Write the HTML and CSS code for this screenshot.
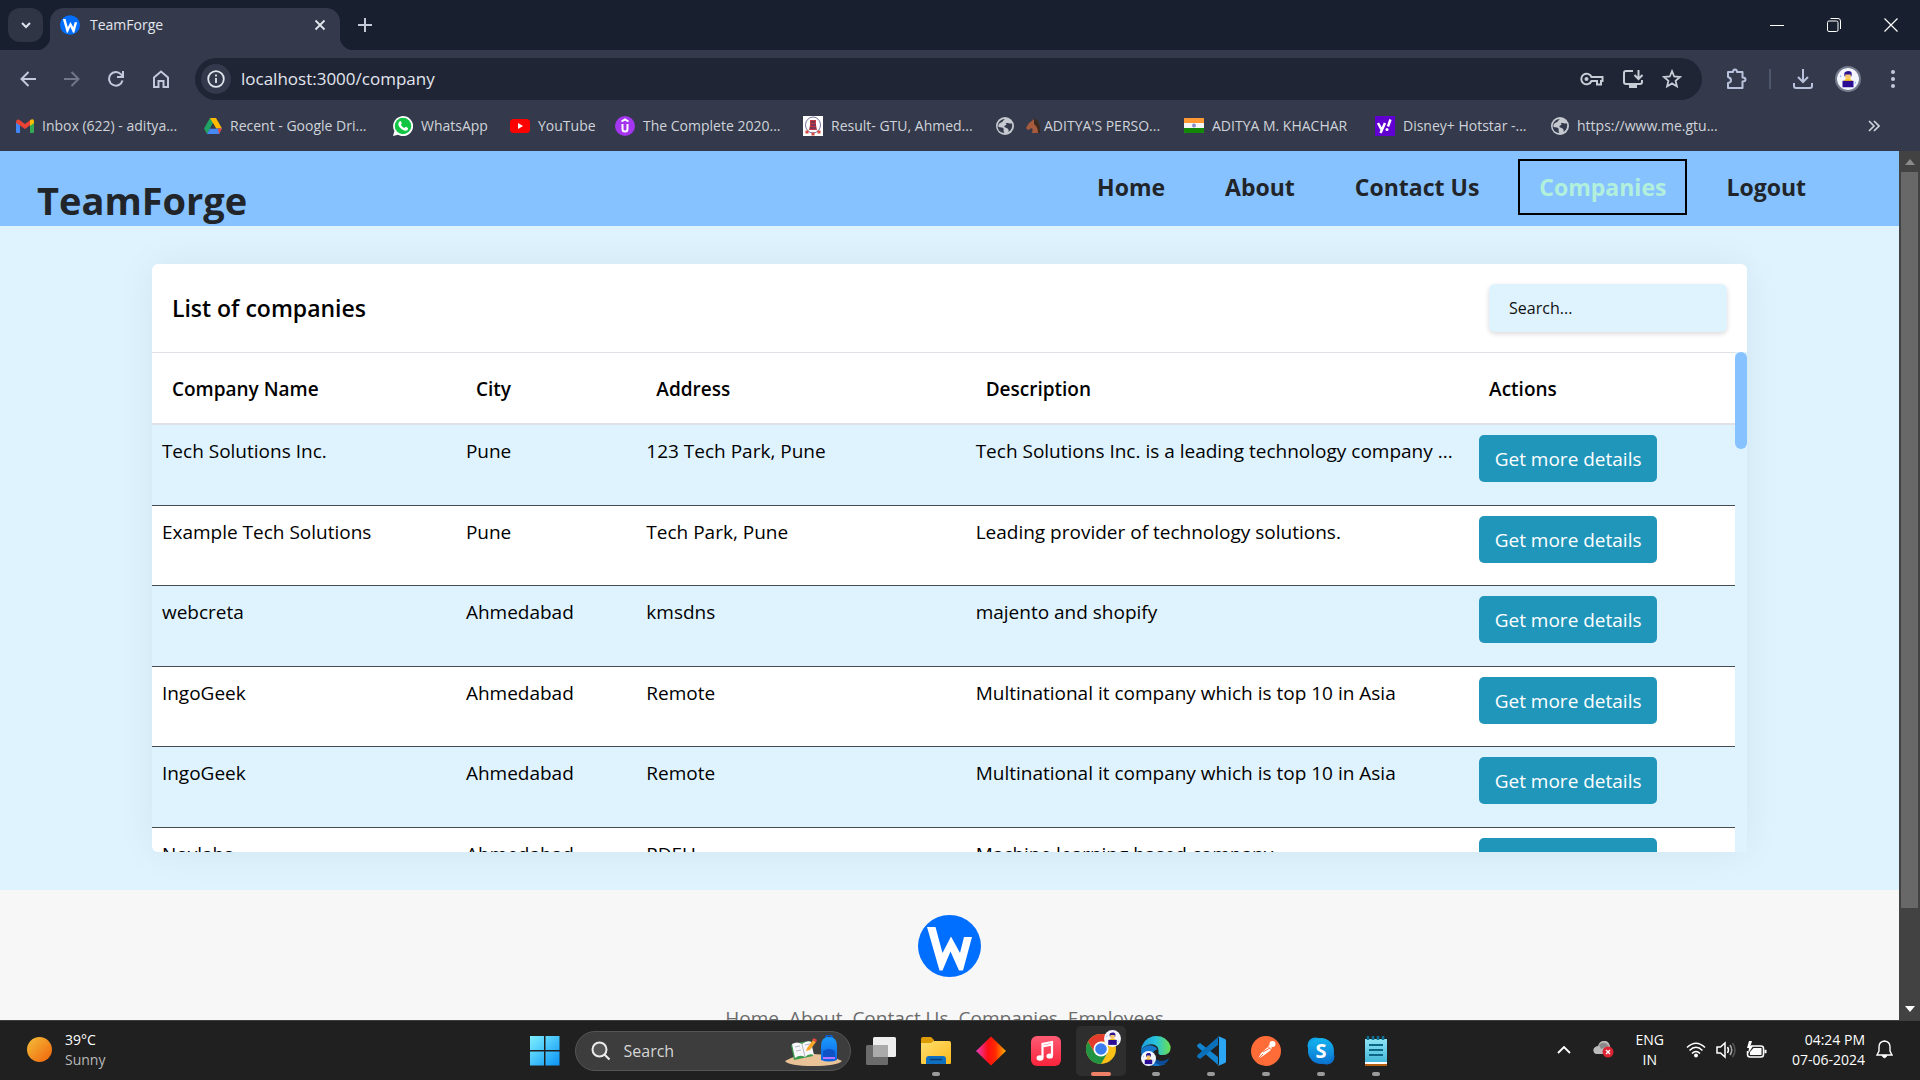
FILE: index.html
```html
<!DOCTYPE html>
<html lang="en">
<head>
<meta charset="utf-8">
<title>TeamForge</title>
<link rel="stylesheet" href="styles.css">
</head>
<body>
<svg class="defs" aria-hidden="true">
  <defs>
    <symbol id="logo" viewBox="0 0 63 62"><ellipse cx="31.500" cy="31" rx="31.500" ry="31" fill="#006eff"/><path d="M9 12h8.500l7 26 8.500-16.500 9 16.500 4-16h8l-9 33.500h-4L32.500 36.500l-8 19h-3z" fill="#fff"/></symbol>
    <symbol id="globe" viewBox="0 0 18 18"><circle cx="9" cy="9" r="9" fill="#c6c9d0"/><path d="M9 2c-2 1-2 3-4 3.500S2 8 2.500 10c2 .5 4.500 0 5 1.500S7 14.500 8.500 16c-5 0-7-4-6.800-7C2 5 5 2 9 2zM10 6c2-.5 3.500 1 6 .5.800 4-1 7-3.500 8.500.5-2.500-.5-3.500-2-4S8 10 8.500 9s2-.5 2-1.500S9.500 7 10 6z" fill="#343a4b"/></symbol>
    <symbol id="avatar" viewBox="0 0 24 24"><circle cx="12" cy="12" r="12" fill="#f4f6ff"/><path d="M8 9V6c0-3 8-4 8 0v3z" fill="#2a1390"/><path d="M9 7h6v4q-3 3-6 0z" fill="#f6c66a"/><path d="M7 14q5-5 10 0v2H7z" fill="#ffc928"/><path d="M6 14h12v7H6z" fill="#2a0d92"/><path d="M4 8v2M20 15v2" stroke="#7ea7ff"/></symbol>
    <linearGradient id="sun" x1="0" y1="0" x2="1" y2="1"><stop stop-color="#f4c03a"/><stop offset="1" stop-color="#f0620a"/></linearGradient>
    <linearGradient id="win" x1="0" y1="0" x2="1" y2="1"><stop stop-color="#7ff0ff"/><stop offset="1" stop-color="#0a94f5"/></linearGradient>
    <linearGradient id="folder" x1="0" y1="0" x2="1" y2="1"><stop stop-color="#ffdf70"/><stop offset="1" stop-color="#fcb91a"/></linearGradient>
    <linearGradient id="gem"><stop stop-color="#e93cc0"/><stop offset=".4" stop-color="#ff0f14"/><stop offset=".65" stop-color="#ff2a00"/><stop offset="1" stop-color="#ffb400"/></linearGradient>
    <linearGradient id="music" x2="0" y2="1"><stop stop-color="#fc5c74"/><stop offset="1" stop-color="#fa233b"/></linearGradient>
    <linearGradient id="edge"><stop stop-color="#1e9bdc"/><stop offset=".5" stop-color="#27c3dc"/><stop offset="1" stop-color="#6ce04e"/></linearGradient>
    <linearGradient id="skype" x2="0" y2="1"><stop stop-color="#14b5f0"/><stop offset="1" stop-color="#0b73d0"/></linearGradient>
    <linearGradient id="pad" x2="0" y2="1"><stop stop-color="#8de5f4"/><stop offset="1" stop-color="#3eb4d6"/></linearGradient>
    <linearGradient id="pack" x2="0" y2="1"><stop stop-color="#1c9cff"/><stop offset="1" stop-color="#0a5fe0"/></linearGradient>
  </defs>
</svg>

<header class="browser">
  <div class="tabstrip">
    <button class="tab-search" aria-label="Search tabs"><svg viewBox="0 0 12 12" width="12" height="12"><path d="M2 4l4 4 4-4" fill="none" stroke="#dfe2ea" stroke-width="2"/></svg></button>
    <div class="tab">
      <svg width="20" height="20"><use href="#logo"/></svg>
      <span class="tab-title">TeamForge</span>
      <button class="icon-btn" aria-label="Close tab"><svg viewBox="0 0 12 12" width="12" height="12"><path d="M1.500 1.500l9 9M10.500 1.500l-9 9" stroke="#e3e6ee" stroke-width="1.800"/></svg></button>
    </div>
    <button class="icon-btn new-tab" aria-label="New tab"><svg viewBox="0 0 14 14" width="14" height="14"><path d="M7 0v14M0 7h14" stroke="#c5cad8" stroke-width="2"/></svg></button>
    <div class="window-controls">
      <button class="icon-btn" aria-label="Minimize"><svg viewBox="0 0 14 14" width="14" height="14"><path d="M0 7.500h14" stroke="#fff"/></svg></button>
      <button class="icon-btn" aria-label="Restore"><svg viewBox="0 0 14 14" width="14" height="14"><g fill="none" stroke="#fff"><rect x=".5" y="3" width="10.500" height="10.500" rx="1.500"/><path d="M3.500.5H11q2.500 0 2.500 2.500v8"/></g></svg></button>
      <button class="icon-btn" aria-label="Close"><svg viewBox="0 0 14 14" width="14" height="14"><path d="M.5.5l13 13M13.500.5l-13 13" stroke="#fff" stroke-width="1.200"/></svg></button>
    </div>
  </div>
  <div class="toolbar">
    <div class="nav-buttons">
      <button class="icon-btn" aria-label="Back"><svg viewBox="0 0 16 16" width="16" height="16"><path d="M16 8H2M8.500 1L1.500 8l7 7" fill="none" stroke="#c3c9dc" stroke-width="2"/></svg></button>
      <button class="icon-btn" aria-label="Forward"><svg viewBox="0 0 16 16" width="16" height="16"><path d="M0 8h14M7.500 1l7 7-7 7" fill="none" stroke="#717788" stroke-width="2"/></svg></button>
      <button class="icon-btn" aria-label="Reload"><svg viewBox="0 0 16 16" width="16" height="16"><path d="M14.500 9.500A6.800 6.800 0 1 1 13 3.300l1.500 1.700M15 0v6H9" fill="none" stroke="#c3c9dc" stroke-width="2"/></svg></button>
      <button class="icon-btn" aria-label="Home"><svg viewBox="0 0 18 18" width="18" height="18"><path d="M2 7.500L9 1.500l7 6V17h-4.500v-6h-5v6H2z" fill="none" stroke="#c3c9dc" stroke-width="2"/></svg></button>
    </div>
    <div class="omnibox">
      <button class="site-info" aria-label="Site information"><svg viewBox="0 0 18 18" width="18" height="18"><circle cx="9" cy="9" r="7.800" fill="none" stroke="#e3e6ee" stroke-width="1.800"/><path d="M9 8v5M9 4.500v2" stroke="#e3e6ee" stroke-width="1.800"/></svg></button>
      <input class="url" type="text" value="localhost:3000/company" aria-label="Address">
      <button class="icon-btn" aria-label="Passwords"><svg viewBox="0 0 24 14" width="24" height="14"><path d="M11.500 5H22.500v4H21v3.500h-4V9h-5.500A5.300 5.300 0 1 1 11.500 5z" fill="none" stroke="#c8ccd6" stroke-width="2"/><circle cx="6.500" cy="7" r="2" fill="#c8ccd6"/></svg></button>
      <button class="icon-btn" aria-label="Install app"><svg viewBox="0 0 22 20" width="22" height="20"><path d="M11 2H4Q2 2 2 4v9q0 2 2 2h14q2 0 2-2v-2M7 18h8" fill="none" stroke="#c8ccd6" stroke-width="2"/><path d="M7 15h8v4H7z" fill="#c8ccd6"/><path d="M16.500 1v8M12.500 6l4 4 4-4" fill="none" stroke="#c8ccd6" stroke-width="2"/></svg></button>
      <button class="icon-btn" aria-label="Bookmark"><svg viewBox="0 0 20 20" width="20" height="20"><path d="M10 2.200l2.200 5.300 5.800.5-4.400 3.800 1.300 5.600L10 14.400l-4.900 3 1.300-5.600L2 8l5.800-.5z" fill="none" stroke="#c8ccd6" stroke-width="1.800"/></svg></button>
    </div>
    <div class="toolbar-end">
      <button class="icon-btn" aria-label="Extensions"><svg viewBox="0 0 22 22" width="22" height="22"><path d="M3 4h5q0-2.500 2-2.500T12 4h5.500v5.500q3 0 3 2t-3 2V20H3v-5q3-.5 3-2.800T3 9z" fill="none" stroke="#b9c2dc" stroke-width="2" stroke-linejoin="round"/></svg></button>
      <span class="divider"></span>
      <button class="icon-btn" aria-label="Downloads"><svg viewBox="0 0 20 20" width="20" height="20"><path d="M10 0v12M5 8l5 5 5-5M1 14v3q0 2 2 2h14q2 0 2-2v-3" fill="none" stroke="#b9c2dc" stroke-width="2"/></svg></button>
      <button class="icon-btn profile" aria-label="Profile"><svg width="22" height="22"><use href="#avatar"/></svg></button>
      <button class="icon-btn" aria-label="Menu"><svg viewBox="0 0 4 18" width="4" height="18" fill="#c3c9dc"><circle cx="2" cy="2" r="2"/><circle cx="2" cy="9" r="2"/><circle cx="2" cy="16" r="2"/></svg></button>
    </div>
  </div>
  <nav class="bookmarks" aria-label="Bookmarks">
    <a href="#"><svg viewBox="0 0 18 14" width="18" height="14"><path d="M0 3v10q0 1 1 1h3V5z" fill="#4285f4"/><path d="M14 5v9h3q1 0 1-1V3z" fill="#34a853"/><path d="M0 3q0-3 2.800-2.500L9 5l6-4.500v5L9 10 0 3.800z" fill="#ea4335"/><path d="M14 1.200Q18-1 18 2.500V4l-4 3z" fill="#fbbc04"/></svg><span>Inbox (622) - aditya...</span></a>
    <a href="#"><svg viewBox="0 0 18 16" width="18" height="16"><path d="M6 0h6L3 16 0 10.500z" fill="#1fa463"/><path d="M6 0h6l6 10.500h-6z" fill="#ffba00"/><path d="M3 16l3-5.500h12L15 16z" fill="#4688f4"/><path d="M9 5.200l3 5.300H6z" fill="#343a4b"/><path d="M14 10.500h4L15 16z" fill="#ea4335"/></svg><span>Recent - Google Dri...</span></a>
    <a href="#"><svg viewBox="0 0 20 20" width="20" height="20"><path d="M0 20l1.400-5A10 10 0 1 1 5 18.700z" fill="#fff"/><circle cx="10" cy="10" r="8.300" fill="#12c644"/><path d="M6.500 5.500q1-1 1.500 0l.8 2-.9 1.200q1.300 2.500 3.600 3.400l1.200-1.300 2.300 1.200q.2 2.500-2.300 2.700C8.500 14.500 5 10 5.300 8q.3-1.700 1.200-2.500z" fill="#fff"/></svg><span>WhatsApp</span></a>
    <a href="#"><svg viewBox="0 0 20 14" width="20" height="14"><rect width="20" height="14" rx="3.500" fill="red"/><path d="M8 4l5 3-5 3z" fill="#fff"/></svg><span>YouTube</span></a>
    <a href="#"><svg viewBox="0 0 20 20" width="20" height="20"><circle cx="10" cy="10" r="10" fill="#a435f0"/><path d="M6.500 5.500L10 3.500l3.500 2M7.500 8v5q0 2.500 2.500 2.500t2.500-2.500V8" fill="none" stroke="#fff" stroke-width="2"/></svg><span>The Complete 2020...</span></a>
    <a href="#"><svg viewBox="0 0 20 20" width="20" height="20"><path fill="#fff" d="M0 0h20v20H0z"/><ellipse cx="10" cy="9" rx="7.500" ry="8" fill="none" stroke="#77719c"/><path d="M7 4h6v5l1 5H6l1-5z" fill="#c43b42"/><path d="M8 6h4M8 9h5M7 12h6" stroke="#32336d"/><path d="M2.500 16h3M8.500 18h3M14.500 16h3" stroke="#d44a40" stroke-width="3"/></svg><span>Result- GTU, Ahmed...</span></a>
    <a href="#"><svg width="18" height="18"><use href="#globe"/></svg><span class="with-emoji"><svg viewBox="0 0 14 15" width="14" height="15"><path d="M8 1l2 2 2 4 1 8H6q1-4 0-5l-4 2-2-2 3-5 3-2z" fill="#a75b3c"/><path d="M8 0l4 3 2 6v6h-2q0-6-4-9z" fill="#3c2920"/></svg>ADITYA'S PERSO...</span></a>
    <a href="#"><svg viewBox="0 0 20 15" width="20" height="15"><rect width="20" height="15" rx="1.500" fill="#f5f5f5"/><path d="M0 5V1q0-1 1-1h18q1 0 1 1v4z" fill="#ff9933"/><path d="M0 10v4q0 1 1 1h18q1 0 1-1v-4z" fill="#138808"/><circle cx="10" cy="7.500" r="2" fill="#8890cc"/></svg><span>ADITYA M. KHACHAR</span></a>
    <a href="#"><svg viewBox="0 0 20 20" width="20" height="20"><path d="M0 0h20v20H0z" fill="#6001d2"/><path d="M3 7l3.500 6.500M10 7l-4.500 10M15.500 3.500l-2.500 7" stroke="#fff" stroke-width="2.500"/><circle cx="12" cy="13.500" r="1.500" fill="#fff"/></svg><span>Disney+ Hotstar -...</span></a>
    <a href="#"><svg width="18" height="18"><use href="#globe"/></svg><span>https://www.me.gtu...</span></a>
    <button class="icon-btn more" aria-label="More bookmarks"><svg viewBox="0 0 12 12" width="12" height="12"><path d="M1 1l5 5-5 5M6 1l5 5-5 5" fill="none" stroke="#d0d4de" stroke-width="1.600"/></svg></button>
  </nav>
</header>

<div class="viewport">
  <div class="page">
    <header class="site-header">
      <a class="brand" href="#">TeamForge</a>
      <nav class="site-nav">
        <a href="#">Home</a>
        <a href="#">About</a>
        <a href="#">Contact Us</a>
        <a class="active" href="#">Companies</a>
        <a href="#">Logout</a>
      </nav>
    </header>
    <main class="content">
      <section class="card">
        <div class="card-head">
          <h1>List of companies</h1>
          <input class="search" type="text" placeholder="Search..." aria-label="Search companies">
        </div>
        <div class="list">
          <table>
            <colgroup><col class="c-name"><col class="c-city"><col class="c-address"><col class="c-desc"><col class="c-actions"></colgroup>
            <thead><tr><th>Company Name</th><th>City</th><th>Address</th><th>Description</th><th>Actions</th></tr></thead>
            <tbody>
              <tr><td>Tech Solutions Inc.</td><td>Pune</td><td>123 Tech Park, Pune</td><td>Tech Solutions Inc. is a leading technology company ...</td><td><button class="details">Get more details</button></td></tr>
              <tr><td>Example Tech Solutions</td><td>Pune</td><td>Tech Park, Pune</td><td>Leading provider of technology solutions.</td><td><button class="details">Get more details</button></td></tr>
              <tr><td>webcreta</td><td>Ahmedabad</td><td>kmsdns</td><td>majento and shopify</td><td><button class="details">Get more details</button></td></tr>
              <tr><td>IngoGeek</td><td>Ahmedabad</td><td>Remote</td><td>Multinational it company which is top 10 in Asia</td><td><button class="details">Get more details</button></td></tr>
              <tr><td>IngoGeek</td><td>Ahmedabad</td><td>Remote</td><td>Multinational it company which is top 10 in Asia</td><td><button class="details">Get more details</button></td></tr>
              <tr><td>Novlabs</td><td>Ahmedabad</td><td>PDEU</td><td>Machine learning based company</td><td><button class="details">Get more details</button></td></tr>
            </tbody>
          </table>
          <div class="list-scroll"><div class="list-thumb"></div></div>
        </div>
      </section>
    </main>
    <footer class="site-footer">
      <svg width="63" height="62"><use href="#logo"/></svg>
      <nav class="footer-nav">
        <a href="#">Home</a><a href="#">About</a><a href="#">Contact Us</a><a href="#">Companies</a><a href="#">Employees</a>
      </nav>
    </footer>
  </div>
  <div class="scrollbar">
    <svg viewBox="0 0 10 6" width="10" height="6"><path d="M0 6l5-6 5 6z" fill="#8b8b8b"/></svg>
    <div class="scroll-track"><div class="scroll-thumb"></div></div>
    <svg viewBox="0 0 10 6" width="10" height="6"><path d="M0 0l5 6 5-6z" fill="#fff"/></svg>
  </div>
</div>

<footer class="taskbar">
  <div class="weather">
    <svg viewBox="0 0 25 25" width="25" height="25"><circle cx="12.500" cy="12.500" r="12.500" fill="url(#sun)"/></svg>
    <div><div>39°C</div><div class="muted">Sunny</div></div>
  </div>
  <div class="apps">
    <button class="app" aria-label="Start"><svg viewBox="0 0 30 30" width="30" height="30"><path d="M0 0h14v14H0zM15.500 0h14v14h-14zM0 15.500h14v14H0zM15.500 15.500h14v14h-14z" fill="url(#win)"/></svg></button>
    <label class="task-search">
      <svg viewBox="0 0 20 20" width="20" height="20"><circle cx="8.500" cy="8.500" r="7" fill="#555" stroke="#ececec" stroke-width="2"/><path d="M13.500 13.500l5 5" stroke="#ececec" stroke-width="2.200"/></svg>
      <input type="text" placeholder="Search" aria-label="Search">
      <svg viewBox="0 0 57 31" width="57" height="31"><path d="M0 26q12-7 28-7t29 7q-5 5-29 5T0 26z" fill="#e9c397"/><path d="M6 10l11-3 9-1 2 15-19 4z" fill="#3c9a4e"/><path d="M7 9q5-3 10 0 5-4 9-2l3 13q-5-2-9 2-5-3-10 1z" fill="#f7f7fb"/><path d="M17 9l3 13M10 12l5-1M11 16l5-1M20 10l5-1" stroke="#b5b7c2"/><path d="M22 13l6-8 3 2-6 8-4 1z" fill="#f9a62b"/><path d="M27 5l2-2 3 2-1 2z" fill="#e44b43"/><path d="M41 3q0-3 3-3t3 3" fill="none" stroke="#0b5ed0" stroke-width="2"/><path d="M36 25V11q0-9 8-9t8 9v14q-8 3-16 0z" fill="url(#pack)"/><path d="M38 16q6-4 12 0v6H38z" fill="#0d53c6"/><path d="M38 23h12" stroke="#b774ff" stroke-width="2"/></svg>
    </label>
    <button class="app" aria-label="Task view"><svg viewBox="0 0 30 28" width="30" height="28"><rect y="8" width="22" height="20" rx="1.500" fill="#6b6b6b"/><rect x="7" width="23" height="20" rx="1.500" fill="#eee"/><path d="M7 8h15v12H7z" fill="#aaa"/></svg></button>
    <button class="app running" aria-label="File Explorer"><svg viewBox="0 0 30 28" width="30" height="28"><path d="M0 2q0-2 2-2h8l3 3v6H0z" fill="#dd9b06"/><path d="M0 6h10l3-2h15q2 0 2 2v20q0 1-1 1H1q-1 0-1-1z" fill="url(#folder)"/><path d="M5 27v-5q0-3 3-3h14q3 0 3 3v5z" fill="#0f6fc0"/><path d="M9 22.500h12" stroke="#073f75" stroke-width="1.500"/></svg></button>
    <button class="app" aria-label="Diamond"><svg viewBox="0 0 30 30" width="30" height="30"><path d="M15 .5L30 15 15 29.500 0 15z" fill="url(#gem)"/></svg></button>
    <button class="app" aria-label="Music"><svg viewBox="0 0 30 30" width="30" height="30"><rect width="30" height="30" rx="6" fill="url(#music)"/><path d="M11.500 21.500V8l9.500-2v13.500M11.500 10.500l9.500-2" fill="none" stroke="#fff" stroke-width="2.200"/><ellipse cx="9" cy="22" rx="3.500" ry="2.800" fill="#fff"/><ellipse cx="18.700" cy="20" rx="3.300" ry="2.600" fill="#fff"/></svg></button>
    <button class="app running current" aria-label="Chrome"><svg viewBox="0 0 40 38" width="40" height="38"><g transform="translate(5 4)"><circle cx="15" cy="15" r="15" fill="#fbc116"/><path d="M2 7.500a15 15 0 0 1 26 0H15L8.500 18.700z" fill="#e33b2e"/><path d="M2 7.500A15 15 0 0 0 15 30l6.500-11.300-13 0z" fill="#229342"/><circle cx="15" cy="15" r="7.500" fill="#fff"/><circle cx="15" cy="15" r="5.800" fill="#3b7ded"/></g><use href="#avatar" x="23" y="0" width="17" height="17"/></svg></button>
    <button class="app running" aria-label="Edge"><svg viewBox="0 0 30 30" width="30" height="30"><path d="M0 15Q1 3 12 .3 25-1.500 29.500 10q1 9-8.500 9-4 0-3.500-3 .5-6-5-7.500Q4 7 0 15z" fill="url(#edge)"/><path d="M0 15q4-7 11-5.500 4 1 5.500 4-6 1-4 8 3 6 9 6.500h3Q17 31.500 9 29 0 25 0 15z" fill="#1478cc"/><path d="M12.500 17q0 7 7.500 8 4 .5 8-3-1 5-7 7-8 0-9.500-7z" fill="#0c4d9b"/><use href="#avatar" x="0" y="15" width="15" height="15"/></svg></button>
    <button class="app running" aria-label="Visual Studio Code"><svg viewBox="0 0 30 30" width="30" height="30"><path d="M1 9l3-2 18 14v8L1.500 11z" fill="#1384d0"/><path d="M1 21l3 2L22 9V1L1.500 19z" fill="#0a70ba"/><path d="M22 0l7 3q1 .5 1 2v20q0 1.500-1 2l-7 3q1-1 1-3V3q0-2-1-3z" fill="#2ba6f5"/></svg></button>
    <button class="app running" aria-label="Postman"><svg viewBox="0 0 30 30" width="30" height="30"><circle cx="15" cy="15" r="15" fill="#ff6c37"/><path d="M7 23l3-6 7-6 3 3-8 6zM17 10l2-1 2 3-1 1z" fill="#fff"/><circle cx="21.500" cy="8" r="3" fill="#fff"/><path d="M12 16l7-4M7 23l5-5" stroke="#ff6c37"/></svg></button>
    <button class="app running" aria-label="Skype"><svg viewBox="0 0 30 30" width="30" height="30"><circle cx="9.500" cy="9.500" r="8" fill="#0fa4e8"/><circle cx="20.500" cy="20.500" r="8" fill="#0b73d0"/><circle cx="15" cy="15" r="13" fill="url(#skype)"/><text x="15" y="22" text-anchor="middle" class="skype-s">S</text></svg></button>
    <button class="app running" aria-label="Notepad"><svg viewBox="0 0 30 30" width="30" height="30"><path d="M4 3h22v25H4z" fill="url(#pad)"/><path d="M4 26h22v2H4z" fill="#fff"/><path d="M4 28h22v2H4z" fill="#b4600f"/><path d="M8 9h14M8 14h14M8 19h14" stroke="#0d6686" stroke-width="2"/><path d="M7 0v4M12 0v4M17 0v4M22 0v4" stroke="#107094" stroke-width="2.500"/></svg></button>
  </div>
  <div class="tray">
    <button class="icon-btn" aria-label="Hidden icons"><svg viewBox="0 0 14 8" width="14" height="8"><path d="M1 7l6-6 6 6" fill="none" stroke="#fff" stroke-width="1.800"/></svg></button>
    <svg viewBox="0 0 21 17" width="21" height="17"><path d="M3 13q-4-2-2-6 2-2 4-2 2-6 8-5 3 1 4 5l1 8z" fill="#bbb"/><path d="M6 4q5-5 10 1l-8 3z" fill="#8a8a8a"/><circle cx="15" cy="11" r="5.500" fill="#dd2432"/><path d="M13 9l4 4M17 9l-4 4" stroke="#fff" stroke-width="1.300"/></svg>
    <div class="lang"><div>ENG</div><div>IN</div></div>
    <div class="status">
      <svg viewBox="0 0 20 16" width="20" height="16"><g fill="none" stroke="#fff" stroke-width="1.600"><path d="M1 5.500Q10-3 19 5.500M3.500 8.500q6.500-6.500 13 0M6 11.500q4-4 8 0"/></g><circle cx="10" cy="13.500" r="2" fill="#fff"/></svg>
      <svg viewBox="0 0 20 18" width="20" height="18"><g fill="none" stroke-width="1.500"><path d="M1 6h3.500L9 2v14l-4.500-4H1zM11.500 6q2 3 0 6" stroke="#fff"/><path d="M14 4q3.500 5 0 10" stroke="#aaa"/><path d="M16.500 2q5 7 0 14" stroke="#555"/></g></svg>
      <svg viewBox="0 0 21 18" width="21" height="18"><path d="M5 5h10q2.500 0 2.500 2.500v6q0 2.500-2.500 2.500H4q-2.500 0-2.500-2.500V10" fill="none" stroke="#fff" stroke-width="1.500"/><path d="M7.500 7h8v7H4v-3zM18.500 8.500l2 .5v3l-2 .5zM3 0L1 7h2l-1 6 5-8H4.500L6 0z" fill="#fff"/></svg>
    </div>
    <div class="clock"><div>04:24 PM</div><div>07-06-2024</div></div>
    <button class="icon-btn" aria-label="Notifications"><svg viewBox="0 0 17 19" width="17" height="19"><path d="M8.500 1Q14 1.500 14 7v4l2 4H1l2-4V7q0-5.500 5.500-6z" fill="none" stroke="#fff" stroke-width="1.400"/><path d="M6 15.500q2.500 4.500 5 0z" fill="#fff" stroke="#fff"/></svg></button>
  </div>
</footer>
</body>
</html>
```
FILE: styles.css
```css
*, *::before, *::after { box-sizing: border-box; }

body {
  margin: 0;
  height: 100vh;
  overflow: hidden;
  display: flex;
  flex-direction: column;
  font-family: "Open Sans", "Noto Sans", sans-serif;
  font-size: 19px;
  line-height: 32px;
  color: #000;
}

a { color: inherit; text-decoration: none; }
button, input { font: inherit; color: inherit; border: 0; padding: 0; margin: 0; background: none; }
svg { display: block; flex: none; }
.defs { position: absolute; width: 0; height: 0; }
.icon-btn { display: flex; align-items: center; justify-content: center; }

/* Browser frame */
.browser { background: #343a4b; color: #d0d3da; font-size: 14px; line-height: 20px; flex: none; }
.tabstrip { display: flex; align-items: flex-start; height: 50px; padding: 8px 22px 0 8px; background: #182030; }
.tab-search { display: flex; align-items: center; justify-content: center; width: 35px; height: 34px; border-radius: 12px; background: #2f3545; }
.tab { position: relative; display: flex; align-items: center; gap: 10px; width: 290px; height: 42px; margin-left: 7px; padding: 0 14px 8px 10px; border-radius: 14px 14px 0 0; background: #343a4b; color: #e3e6ee; }
.tab::before, .tab::after { content: ""; position: absolute; bottom: 0; width: 14px; height: 14px; }
.tab::before { right: 100%; background: radial-gradient(circle at 0 0, transparent 14px, #343a4b 15px); }
.tab::after { left: 100%; background: radial-gradient(circle at 100% 0, transparent 14px, #343a4b 15px); }
.tab-title { flex: 1; }
.new-tab { margin: 10px 0 0 18px; }
.window-controls { display: flex; gap: 43px; margin: 10px 0 0 auto; }

.toolbar { display: flex; align-items: center; height: 58px; padding: 0 25px 0 20px; }
.nav-buttons { display: flex; gap: 28px; width: 175px; }
.omnibox { display: flex; align-items: center; flex: 1; height: 42px; padding: 0 20px 0 6px; gap: 18px; border-radius: 21px; background: #1f2535; }
.site-info { display: flex; align-items: center; justify-content: center; width: 30px; height: 30px; border-radius: 50%; background: #343a4b; }
.url { flex: 1; margin-left: -8px; font-size: 17px; color: #e3e6ee; }
.toolbar-end { display: flex; align-items: center; gap: 22px; margin-left: 23px; }
.divider { width: 2px; height: 20px; background: #4d566d; }
.profile { width: 26px; height: 26px; border: 2px solid #747b8c; border-radius: 50%; }
.toolbar-end .profile + .icon-btn { margin-left: 8px; }

.bookmarks { display: grid; grid-template-columns: 188px 189px 117px 105px 188px 193px 188px 191px 176px 1fr auto; align-items: center; height: 43px; padding: 0 40px 8px 16px; }
.bookmarks a { display: flex; align-items: center; gap: 8px; white-space: nowrap; }
.bookmarks .with-emoji { display: flex; align-items: center; gap: 4px; margin-left: 4px; }

/* Page viewport */
.viewport { flex: 1; min-height: 0; display: flex; background: #424242; }
.page { flex: 1; min-width: 0; overflow: hidden; background: #dff3ff; }
.scrollbar { display: flex; flex-direction: column; align-items: center; width: 21px; padding: 8px 0; }
.scroll-track { flex: 1; width: 17px; margin: 7px 0; }
.scroll-thumb { height: 89%; background: #686868; }

.site-header { display: flex; justify-content: space-between; align-items: flex-start; height: 75px; padding: 8px 72px 0 37px; background: #86c2ff; color: #212529; font-weight: 700; }
.brand { font-size: 38px; line-height: 60px; margin-top: 11px; }
.site-nav { display: flex; gap: 18px; font-size: 23px; line-height: 32px; }
.site-nav a { padding: 10px 19px; border: 2px solid transparent; }
.site-nav .active { border-color: #000; color: #b2f0dc; }

.content { padding: 38px 8%; }
.card { border-radius: 6px; background: #fff; box-shadow: 0 0 40px rgba(0, 0, 0, .06); }
.card-head { display: flex; align-items: center; justify-content: space-between; height: 88px; padding: 0 20px; }
.card-head h1 { margin: 0; font-size: 23px; font-weight: 600; }
.search { width: 238px; height: 48px; padding: 0 20px; border-radius: 6px; background: #dff3ff; font-size: 16px; box-shadow: 0 2px 5px rgba(0, 0, 0, .15); }
.search::placeholder { color: #111; opacity: 1; }

.list { display: flex; height: 500px; overflow: hidden; }
table { flex: 1; min-width: 0; table-layout: fixed; border-collapse: separate; border-spacing: 0; }
.c-name { width: 19.2%; }
.c-city { width: 11.4%; }
.c-address { width: 20.8%; }
.c-desc { width: 31.8%; }
th { height: 73px; padding: 2px 20px 0; border-top: 1px solid #dee2e6; border-bottom: 2px solid #dee2e6; text-align: left; font-size: 19px; font-weight: 600; }
td { height: 80px; padding: 10px; border-bottom: 1px solid #454b52; vertical-align: top; white-space: nowrap; }
tbody tr:nth-child(odd) { background: #dff3ff; }
tbody tr:nth-child(odd) td { height: 81px; }
.details { display: block; width: 178px; height: 47px; border-radius: 5px; background: #2196bb; color: #fff; font-size: 19px; }
.list-scroll { width: 12px; background: #dff3ff; }
.list-thumb { height: 97px; border-radius: 6px; background: #86c2ff; }

.site-footer { display: flex; flex-direction: column; align-items: center; gap: 25px; padding: 25px 0; background: #f7f7f7; color: #6c6c6c; }
.footer-nav { display: flex; }
.footer-nav a { margin-right: 10px; }

/* Taskbar */
.taskbar { flex: none; display: grid; grid-template-columns: 1fr auto 1fr; align-items: center; height: 60px; border-top: 1px solid #3c3d3d; background: #202020; color: #fff; font-size: 14px; line-height: 20px; }
.weather { display: flex; align-items: center; gap: 13px; padding: 0 0 2px 27px; }
.muted { color: #b8b8b8; }
.apps { display: flex; align-items: center; gap: 5px; }
.app { position: relative; display: flex; align-items: center; justify-content: center; width: 50px; height: 50px; border-radius: 5px; }
.current { background: #2e2e2e; }
.current svg { margin-bottom: 4px; }
.running::after { content: ""; position: absolute; bottom: 0; width: 8px; height: 4px; border-radius: 2px; background: #9a9a9a; }
.current::after { width: 20px; background: #ee8068; }
.task-search { display: flex; align-items: center; gap: 13px; width: 276px; height: 40px; padding: 0 8px 0 15px; border: 1px solid #555; border-radius: 20px; background: #3d3d3d; font-size: 16px; }
.task-search input { flex: 1; min-width: 0; }
.task-search input::placeholder { color: #d6d6d6; opacity: 1; }
.skype-s { fill: #fff; font-size: 20px; font-weight: 700; }
.tray { display: flex; align-items: center; justify-content: flex-end; gap: 22px; padding: 0 27px 2px 0; }
.lang { text-align: center; }
.status { display: flex; align-items: center; gap: 10px; }
.clock { min-width: 76px; text-align: right; }
.tray .clock + .icon-btn { margin-left: -11px; }
```
